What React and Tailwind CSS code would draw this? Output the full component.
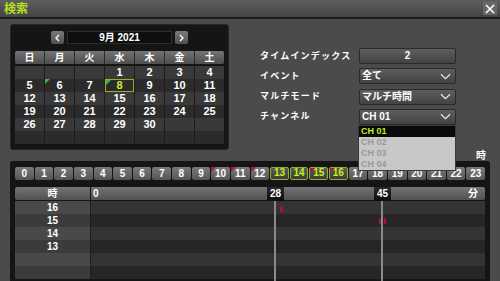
const weekdays = ['日', '月', '火', '水', '木', '金', '土'];

const weeks = [
  ['', '', '', 1, 2, 3, 4],
  [5, 6, 7, 8, 9, 10, 11],
  [12, 13, 14, 15, 16, 17, 18],
  [19, 20, 21, 22, 23, 24, 25],
  [26, 27, 28, 29, 30, '', ''],
  ['', '', '', '', '', '', ''],
];

const hasRecord = [6, 8];
const selectedDay = 8;

const hours = Array.from({ length: 24 }, (_, i) => i);
const activeHours = [13, 14, 15, 16];
const eventHours = [10, 11, 12, 15, 16];

const rows = [16, 15, 14, 13, '', ''];

const channels = ['CH 01', 'CH 02', 'CH 03', 'CH 04'];

const ChevronDown = () => (
  <svg width="11" height="7" viewBox="0 0 11 7" fill="none" stroke="#e6e6e6" strokeWidth="1.3">
    <path d="M1 1.2l4.5 4.5 4.5-4.5" />
  </svg>
);

const Arrow = ({ dir }) => (
  <svg width="5" height="8" viewBox="0 0 5 8" fill="none" stroke="#fff" strokeWidth="1.4">
    <path d={dir === 'left' ? 'M4 1L1 4l3 3' : 'M1 1l3 3-3 3'} />
  </svg>
);

const Calendar = () => (
  <div className="w-[219px] h-[126px] bg-[#151515] rounded-[3px] border border-[#262626] px-[4px] pt-[6px]">
    <div className="flex justify-center gap-[3px] h-[13px]">
      <div className="w-[13px] h-[13px] rounded-[2px] bg-gradient-to-b from-[#7a7a7a] to-[#505050] flex items-center justify-center">
        <Arrow dir="left" />
      </div>
      <div className="w-[105px] h-[13px] bg-[#0e0e0e] border border-[#2e2e2e] flex items-center justify-center text-[10px] font-bold text-white leading-none">
        9月 2021
      </div>
      <div className="w-[13px] h-[13px] rounded-[2px] bg-gradient-to-b from-[#7a7a7a] to-[#505050] flex items-center justify-center">
        <Arrow dir="right" />
      </div>
    </div>

    <div className="mt-[7px] grid grid-cols-7 gap-[1px] h-[13px] bg-[#2a2a2a] rounded-[2px] overflow-hidden">
      {weekdays.map((d) => (
        <div
          key={d}
          className="bg-gradient-to-b from-[#747474] to-[#4e4e4e] flex items-center justify-center text-[10px] font-bold text-white leading-none"
        >
          {d}
        </div>
      ))}
    </div>

    <div className="mt-[2px] flex flex-col">
      {weeks.map((week, wi) => (
        <div key={wi} className="grid grid-cols-7 gap-[1px] h-[13px] bg-[#1c1c1c]">
          {week.map((day, di) => (
            <div
              key={di}
              className={`relative flex items-center justify-center text-[11px] font-bold leading-none ${
                wi % 2 === 0 ? 'bg-[#393939]' : 'bg-[#2b2b2b]'
              } ${
                day === selectedDay
                  ? 'border border-[#8fb52a] text-[#d0ea38]'
                  : 'text-white'
              }`}
            >
              {hasRecord.includes(day) && (
                <span className="absolute left-0 top-0 w-0 h-0 border-t-[5px] border-t-[#39b54a] border-r-[5px] border-r-transparent" />
              )}
              {day}
            </div>
          ))}
        </div>
      ))}
    </div>
  </div>
);

const SelectBox = ({ children }) => (
  <div className="w-[97px] h-[16px] rounded-[2px] border border-[#2a2a2a] bg-gradient-to-b from-[#5e5e5e] to-[#434343] flex items-center justify-between pl-[2px] pr-[4px] text-[10px] font-bold text-white leading-none">
    <span>{children}</span>
    <ChevronDown />
  </div>
);

const FormRow = ({ label, children }) => (
  <div className="flex items-center h-[16px]">
    <div className="w-[99px] text-[9px] font-bold text-white tracking-[1.2px] leading-none">{label}</div>
    {children}
  </div>
);

const SearchForm = () => (
  <div className="relative ml-[31px] mt-[24px] flex flex-col gap-[4.3px]">
    <FormRow label="タイムインデックス">
      <div className="w-[97px] h-[16px] rounded-[2px] border border-[#2a2a2a] bg-gradient-to-b from-[#5e5e5e] to-[#434343] flex items-center justify-center text-[10px] font-bold text-white leading-none">
        2
      </div>
    </FormRow>
    <FormRow label="イベント">
      <SelectBox>全て</SelectBox>
    </FormRow>
    <FormRow label="マルチモード">
      <SelectBox>マルチ時間</SelectBox>
    </FormRow>
    <FormRow label="チャンネル">
      <SelectBox>CH 01</SelectBox>
    </FormRow>

    <div className="absolute left-[98px] top-[77px] w-[98px] border border-[#3a3a3a] bg-[#c8c8c8] z-10 flex flex-col">
      {channels.map((c, i) => (
        <div
          key={c}
          className={`h-[11px] flex items-center pl-[2px] text-[9px] font-bold leading-none overflow-hidden ${
            i === 0 ? 'bg-[#0a0a0a] text-[#c8ee1e]' : 'text-[#9a9a9a]'
          }`}
        >
          {c}
        </div>
      ))}
    </div>
  </div>
);

const Timeline = () => (
  <div className="mx-[10px] bg-[#151515] rounded-t-[3px] px-[5px] pt-[6px] h-[130px]">
    <div className="grid grid-cols-24 gap-[1px] h-[13px]">
      {hours.map((h) => {
        const active = activeHours.includes(h);
        return (
          <div
            key={h}
            className={`relative rounded-[2px] flex items-end justify-center pb-[1px] text-[10px] font-bold leading-none ${
              active
                ? 'border border-[#8db321] bg-gradient-to-b from-[#5a5a5a] to-[#3c3c3c] text-[#c8f01a]'
                : 'bg-gradient-to-b from-[#7a7a7a] to-[#555555] text-white'
            }`}
          >
            {eventHours.includes(h) && (
              <span className="absolute left-0 top-0 w-0 h-0 border-t-[5px] border-t-[#b3123f] border-r-[5px] border-r-transparent" />
            )}
            {h}
          </div>
        );
      })}
    </div>

    <div className="relative mt-[7px]">
      <div className="flex h-[13px] gap-[1px]">
        <div className="w-[75px] rounded-l-[2px] bg-gradient-to-b from-[#747474] to-[#515151] flex items-center justify-center text-[10px] font-bold text-white leading-none">
          時
        </div>
        <div className="flex-1 rounded-r-[2px] bg-gradient-to-b from-[#747474] to-[#515151] flex items-center justify-between px-[2px] text-[10px] font-bold text-white leading-none">
          <span>0</span>
          <span className="mr-[5px]">分</span>
        </div>
      </div>

      <div className="mt-[1px] flex flex-col">
        {rows.map((r, i) => (
          <div key={i} className="flex h-[13px] gap-[1px] bg-[#1e1e1e]">
            <div
              className={`w-[75px] flex items-center justify-center text-[10px] font-bold text-white leading-none ${
                i % 2 === 0 ? 'bg-[#494949]' : 'bg-[#3b3b3b]'
              }`}
            >
              {r}
            </div>
            <div className={`flex-1 ${i % 2 === 0 ? 'bg-[#343434]' : 'bg-[#262626]'}`} />
          </div>
        ))}
      </div>

      {/* time index lines */}
      <div className="absolute left-[259px] top-[13px] w-[2px] h-[90px] bg-[#8a8a8a]" />
      <div className="absolute left-[366px] top-[13px] w-[2px] h-[90px] bg-[#8a8a8a]" />

      {/* recorded events */}
      <div className="absolute left-[265px] top-[19px] w-[3px] h-[6px] bg-[#a8103a]" />
      <div className="absolute left-[364px] top-[31px] w-[2px] h-[6px] bg-[#a8103a]" />
      <div className="absolute left-[369px] top-[31px] w-[2px] h-[6px] bg-[#a8103a]" />

      {/* markers */}
      <div className="absolute left-[252px] top-0 w-[17px] h-[14px] bg-gradient-to-b from-[#2a2a2a] to-[#0c0c0c] flex items-center justify-center text-[10px] font-bold text-white leading-none">
        28
      </div>
      <div className="absolute left-[359px] top-0 w-[17px] h-[14px] bg-gradient-to-b from-[#2a2a2a] to-[#0c0c0c] flex items-center justify-center text-[10px] font-bold text-white leading-none">
        45
      </div>
    </div>
  </div>
);

export default function App() {
  return (
    <div className="w-[500px] h-[281px] overflow-hidden bg-[#4b4b4b] font-[Liberation_Sans,Noto_Sans_CJK_JP,sans-serif] select-none">
      <div className="h-[19px] bg-gradient-to-b from-[#5e5e5e] to-[#444444] border-b-2 border-[#1c1c1c] flex items-center justify-between pl-[4px] pr-[3px]">
        <span className="text-[12px] font-bold text-[#b4e01e] leading-none">検索</span>
        <div className="w-[14px] h-[13px] bg-[#686868] flex items-center justify-center">
          <svg width="10" height="10" viewBox="0 0 10 10" stroke="#fff" strokeWidth="1.6">
            <path d="M1 1l8 8M9 1l-8 8" />
          </svg>
        </div>
      </div>

      <div className="flex pl-[10px] pt-[5px] h-[131px]">
        <Calendar />
        <SearchForm />
      </div>

      <div className="h-[11px] flex justify-end items-start pr-[14px]">
        <span className="text-[10px] font-bold text-white leading-none mt-[1px]">時</span>
      </div>

      <Timeline />
    </div>
  );
}
